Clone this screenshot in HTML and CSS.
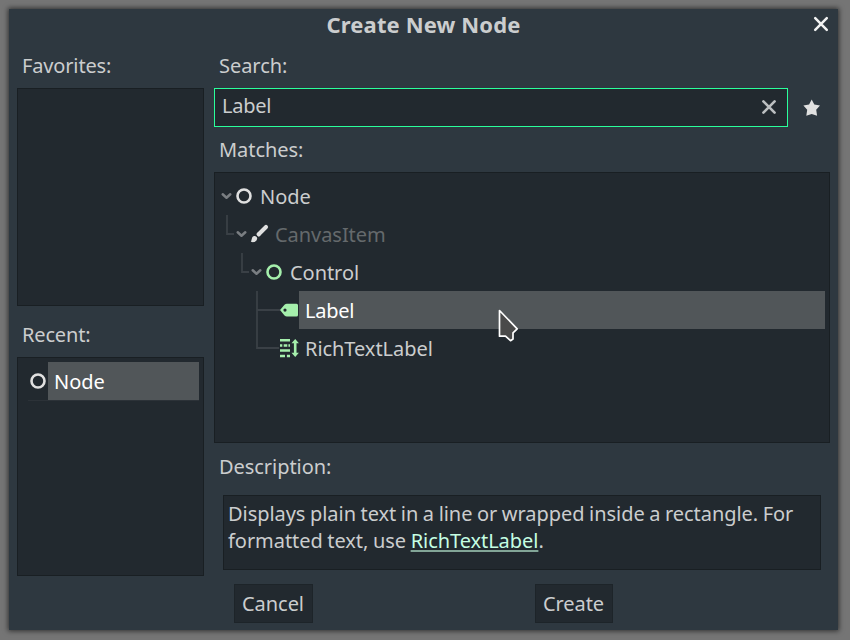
FILE: index.html
```html
<!DOCTYPE html>
<html lang="en">
<head>
<meta charset="utf-8">
<title>Create New Node</title>
<link rel="stylesheet" href="styles.css">
</head>
<body>
<main class="dialog">
  <header class="titlebar">
    <h1>Create New Node</h1>
    <svg class="close" width="16" height="16" viewBox="0 0 16 16"><path d="M2.2 2.2 13.8 13.8M13.8 2.2 2.2 13.8" stroke="#f2f3f3" stroke-width="2.5" stroke-linecap="round"/></svg>
  </header>
  <div class="columns">
    <aside class="side">
      <div class="label">Favorites:</div>
      <div class="panel favorites"></div>
      <div class="label">Recent:</div>
      <div class="panel recent">
        <div class="recent-row">
          <svg width="26" height="38" viewBox="0 0 26 38"><circle cx="16" cy="19" r="6.5" fill="none" stroke="#e0e0e0" stroke-width="2.6"/></svg>
          <span class="name selected">Node</span>
        </div>
      </div>
    </aside>
    <section class="content">
      <div class="label">Search:</div>
      <div class="search-row">
        <div class="search"><span>Label</span>
          <svg width="16" height="16" viewBox="0 0 16 16"><path d="M2.4 2.4 13.6 13.6M13.6 2.4 2.4 13.6" stroke="#bcbfc1" stroke-width="2.6" stroke-linecap="round"/></svg>
        </div>
        <svg class="star" width="18" height="18" viewBox="0 0 18 18"><path d="M8.7 .4 11.3 5.6 17 6.4 13.2 10.7 14.1 16.8 8.7 15.1 3.3 16.8 4.2 10.7.4 6.4 6.1 5.6Z" fill="#e0e0e0"/></svg>
      </div>
      <div class="label">Matches:</div>
      <div class="panel tree">
        <div class="row">
          <svg width="39" height="38" viewBox="0 0 39 38"><path class="chevron" d="M7.7 17.3 11.5 20.7 15.3 17.3"/><circle class="ring" cx="29" cy="19" r="6.5"/></svg>
          <span class="name">Node</span>
        </div>
        <div class="row">
          <svg width="54" height="38" viewBox="0 0 54 38"><path class="guide" d="M12 0V19H19"/><path class="chevron" d="M22.7 17.3 26.5 20.7 30.3 17.3"/><path d="M51 12 43.7 19.3" stroke="#e0e0e0" stroke-width="4.1" stroke-linecap="round"/><path d="M42.2 18.3 44.7 20.9" stroke="#e0e0e0" stroke-width="2.2"/><path d="M35.8 26.5C37.2 25.5 36.2 21 39.4 21C41.8 21 42.8 22.8 41.8 24.8C40.6 27.6 37.1 27.6 35.8 26.5Z" fill="#e0e0e0"/></svg>
          <span class="name muted">CanvasItem</span>
        </div>
        <div class="row">
          <svg width="69" height="38" viewBox="0 0 69 38"><path class="guide" d="M27 0V19H34"/><path class="chevron" d="M37.7 17.3 41.5 20.7 45.3 17.3"/><circle class="ring green" cx="59" cy="19" r="6.5"/></svg>
          <span class="name">Control</span>
        </div>
        <div class="row">
          <svg width="84" height="38" viewBox="0 0 84 38"><path class="guide" d="M42 0V38M42 19H65"/><path fill-rule="evenodd" d="M65 19 69.5 13.8Q70.5 12.8 72 12.8H81.5Q83 12.8 83 14.3V24Q83 25.5 81.5 25.5H72Q70.5 25.5 69.5 24.4ZM71.6 19.1A1.6 1.6 0 1 0 68.4 19.1 1.6 1.6 0 1 0 71.6 19.1Z" fill="#a5efac"/></svg>
          <span class="name selected">Label</span>
        </div>
        <div class="row">
          <svg width="84" height="38" viewBox="0 0 84 38"><path class="guide" d="M42 0V19H64"/><path d="M65 11.2H75M65 16.4H67.3M68.7 16.4H72.3M73.4 16.4H75M65 21.6H75M65 26.9H70M71.9 26.9H75" stroke="#a5efac" stroke-width="2.5"/><path d="M80.2 10 83.9 14.2H81.5V23.8H83.9L80.2 28 76.5 23.8H78.9V14.2H76.5Z" fill="#a5efac"/></svg>
          <span class="name">RichTextLabel</span>
        </div>
      </div>
      <div class="label description-label">Description:</div>
      <div class="panel description">Displays plain text in a line or wrapped inside a rectangle. For formatted text, use <a>RichTextLabel</a>.</div>
      <footer class="actions"><button>Cancel</button><button>Create</button></footer>
    </section>
  </div>
</main>
<svg class="cursor" width="24" height="36" viewBox="0 0 24 36"><path d="M2.5 2.5 20.2 20.8 16 24.8V31L13.5 32.7 8.5 28.2H2.5Z" fill="#4a4a4a" stroke="#fff" stroke-width="1.7" stroke-linejoin="round"/></svg>
</body>
</html>
```

FILE: styles.css
```css
* { box-sizing: border-box; }

body {
  margin: 0;
  padding: 9px 12px 10px 9px;
  height: 640px;
  overflow: hidden;
  background: #757575;
  color: #cbcdce;
  font: 20px/27px "Noto Sans", sans-serif;
  letter-spacing: -0.05px;
}

svg { display: block; flex: none; }

.dialog {
  height: 621px;
  padding: 0 8px;
  background: #2e3840;
  box-shadow: 0 0 5px 1px rgba(0, 0, 0, .6);
}

.titlebar {
  position: relative;
  height: 38px;
}

h1 {
  margin: 0;
  padding-top: 2px;
  font-size: 22px;
  font-weight: 700;
  letter-spacing: .12px;
  line-height: 27px;
  text-align: center;
}

.close { position: absolute; top: 7px; right: 1px; }

.columns {
  display: grid;
  grid-template-columns: 187px 616px;
  gap: 10px;
}

.side, .content { display: flex; flex-direction: column; }

.label { padding: 5px 5px 9px; height: 41px; }
.side .label { letter-spacing: -.15px; }

.panel { background: #22292f; border: 1px solid #191f23; }

.favorites { height: 218px; margin-bottom: 10px; }

.recent { height: 219px; padding: 4px; }

.recent-row { display: flex; border-bottom: 1px solid #2c3238; margin-left: 6px; }
.recent-row svg { margin-left: -6px; }

.name {
  flex: 1;
  height: 38px;
  padding: 6px 6px 0;
}

.selected { background: #515659; color: #fff; }
.muted { color: #65696c; }

.search-row { display: flex; height: 39px; margin-bottom: 4px; }

.search {
  width: 574px;
  padding: 3px 10px 0 7px;
  display: flex;
  justify-content: space-between;
  background: #22292f;
  border: 1px solid #2aff9b;
}

.search, .row .selected { letter-spacing: -.25px; }

.search svg { margin-top: 7px; }
.star { margin: 11px 0 0 15px; }

.tree { height: 271px; padding: 4px 4px 4px 0; }

.row { display: flex; height: 38px; }

.guide { fill: none; stroke: #3a4046; stroke-width: 1.8; }
.chevron { fill: none; stroke: #7a7e82; stroke-width: 2.5; stroke-linecap: round; stroke-linejoin: round; }
.ring { fill: none; stroke: #e0e0e0; stroke-width: 2.6; }
.green { stroke: #a5efac; }

.description-label { height: 52px; padding-top: 10px; }

.description {
  height: 75px;
  margin: 0 9px;
  padding: 4px;
  word-spacing: -.55px;
}

.description a {
  color: #c5ffe3;
  text-decoration: underline;
  text-decoration-color: #82a597;
  text-decoration-thickness: 2px;
  text-underline-offset: 2px;
  text-decoration-skip-ink: none;
}

.actions { display: flex; gap: 222px; padding: 14px 0 0 20px; }

button {
  width: 79px;
  height: 39px;
  padding: 0 1px 0 0;
  background: #22292f;
  border: 1px solid #1d2429;
  color: inherit;
  font: inherit;
  letter-spacing: inherit;
}

button + button { width: 78px; }

.cursor { position: absolute; left: 497px; top: 308px; }
```
